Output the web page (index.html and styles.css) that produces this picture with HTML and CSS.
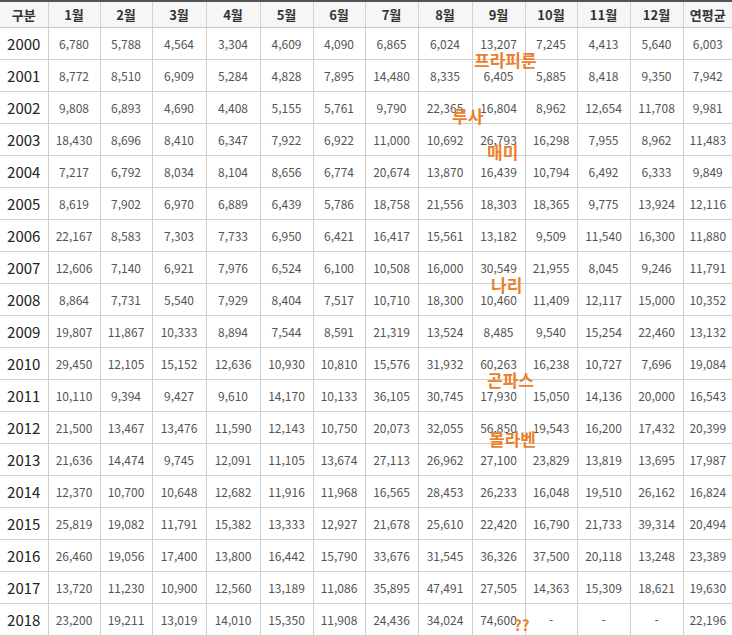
FILE: index.html
```html
<!DOCTYPE html>
<html lang="ko">
<head>
<meta charset="utf-8">
<link rel="stylesheet" href="styles.css">
</head>
<body>
<div class="wrap">
<table class="tbl">
<colgroup>
<col class="c0"><col class="c1"><col class="c2"><col class="c3"><col class="c4"><col class="c5"><col class="c6"><col class="c7"><col class="c8"><col class="c9"><col class="c10"><col class="c11"><col class="c12"><col class="c13">
</colgroup>
<thead>
<tr><th>구분</th><th>1월</th><th>2월</th><th>3월</th><th>4월</th><th>5월</th><th>6월</th><th>7월</th><th>8월</th><th>9월</th><th>10월</th><th>11월</th><th>12월</th><th>연평균</th></tr>
</thead>
<tbody>
<tr><td class="y">2000</td><td>6,780</td><td>5,788</td><td>4,564</td><td>3,304</td><td>4,609</td><td>4,090</td><td>6,865</td><td>6,024</td><td>13,207</td><td>7,245</td><td>4,413</td><td>5,640</td><td>6,003</td></tr>
<tr><td class="y">2001</td><td>8,772</td><td>8,510</td><td>6,909</td><td>5,284</td><td>4,828</td><td>7,895</td><td>14,480</td><td>8,335</td><td>6,405</td><td>5,885</td><td>8,418</td><td>9,350</td><td>7,942</td></tr>
<tr><td class="y">2002</td><td>9,808</td><td>6,893</td><td>4,690</td><td>4,408</td><td>5,155</td><td>5,761</td><td>9,790</td><td>22,365</td><td>16,804</td><td>8,962</td><td>12,654</td><td>11,708</td><td>9,981</td></tr>
<tr><td class="y">2003</td><td>18,430</td><td>8,696</td><td>8,410</td><td>6,347</td><td>7,922</td><td>6,922</td><td>11,000</td><td>10,692</td><td>26,793</td><td>16,298</td><td>7,955</td><td>8,962</td><td>11,483</td></tr>
<tr><td class="y">2004</td><td>7,217</td><td>6,792</td><td>8,034</td><td>8,104</td><td>8,656</td><td>6,774</td><td>20,674</td><td>13,870</td><td>16,439</td><td>10,794</td><td>6,492</td><td>6,333</td><td>9,849</td></tr>
<tr><td class="y">2005</td><td>8,619</td><td>7,902</td><td>6,970</td><td>6,889</td><td>6,439</td><td>5,786</td><td>18,758</td><td>21,556</td><td>18,303</td><td>18,365</td><td>9,775</td><td>13,924</td><td>12,116</td></tr>
<tr><td class="y">2006</td><td>22,167</td><td>8,583</td><td>7,303</td><td>7,733</td><td>6,950</td><td>6,421</td><td>16,417</td><td>15,561</td><td>13,182</td><td>9,509</td><td>11,540</td><td>16,300</td><td>11,880</td></tr>
<tr><td class="y">2007</td><td>12,606</td><td>7,140</td><td>6,921</td><td>7,976</td><td>6,524</td><td>6,100</td><td>10,508</td><td>16,000</td><td>30,549</td><td>21,955</td><td>8,045</td><td>9,246</td><td>11,791</td></tr>
<tr><td class="y">2008</td><td>8,864</td><td>7,731</td><td>5,540</td><td>7,929</td><td>8,404</td><td>7,517</td><td>10,710</td><td>18,300</td><td>10,460</td><td>11,409</td><td>12,117</td><td>15,000</td><td>10,352</td></tr>
<tr><td class="y">2009</td><td>19,807</td><td>11,867</td><td>10,333</td><td>8,894</td><td>7,544</td><td>8,591</td><td>21,319</td><td>13,524</td><td>8,485</td><td>9,540</td><td>15,254</td><td>22,460</td><td>13,132</td></tr>
<tr><td class="y">2010</td><td>29,450</td><td>12,105</td><td>15,152</td><td>12,636</td><td>10,930</td><td>10,810</td><td>15,576</td><td>31,932</td><td>60,263</td><td>16,238</td><td>10,727</td><td>7,696</td><td>19,084</td></tr>
<tr><td class="y">2011</td><td>10,110</td><td>9,394</td><td>9,427</td><td>9,610</td><td>14,170</td><td>10,133</td><td>36,105</td><td>30,745</td><td>17,930</td><td>15,050</td><td>14,136</td><td>20,000</td><td>16,543</td></tr>
<tr><td class="y">2012</td><td>21,500</td><td>13,467</td><td>13,476</td><td>11,590</td><td>12,143</td><td>10,750</td><td>20,073</td><td>32,055</td><td>56,850</td><td>19,543</td><td>16,200</td><td>17,432</td><td>20,399</td></tr>
<tr><td class="y">2013</td><td>21,636</td><td>14,474</td><td>9,745</td><td>12,091</td><td>11,105</td><td>13,674</td><td>27,113</td><td>26,962</td><td>27,100</td><td>23,829</td><td>13,819</td><td>13,695</td><td>17,987</td></tr>
<tr><td class="y">2014</td><td>12,370</td><td>10,700</td><td>10,648</td><td>12,682</td><td>11,916</td><td>11,968</td><td>16,565</td><td>28,453</td><td>26,233</td><td>16,048</td><td>19,510</td><td>26,162</td><td>16,824</td></tr>
<tr><td class="y">2015</td><td>25,819</td><td>19,082</td><td>11,791</td><td>15,382</td><td>13,333</td><td>12,927</td><td>21,678</td><td>25,610</td><td>22,420</td><td>16,790</td><td>21,733</td><td>39,314</td><td>20,494</td></tr>
<tr><td class="y">2016</td><td>26,460</td><td>19,056</td><td>17,400</td><td>13,800</td><td>16,442</td><td>15,790</td><td>33,676</td><td>31,545</td><td>36,326</td><td>37,500</td><td>20,118</td><td>13,248</td><td>23,389</td></tr>
<tr><td class="y">2017</td><td>13,720</td><td>11,230</td><td>10,900</td><td>12,560</td><td>13,189</td><td>11,086</td><td>35,895</td><td>47,491</td><td>27,505</td><td>14,363</td><td>15,309</td><td>18,621</td><td>19,630</td></tr>
<tr><td class="y">2018</td><td>23,200</td><td>19,211</td><td>13,019</td><td>14,010</td><td>15,350</td><td>11,908</td><td>24,436</td><td>34,024</td><td>74,600</td><td>-</td><td>-</td><td>-</td><td>22,196</td></tr>
</tbody>
</table>
<span class="note n1">프라피룬</span>
<span class="note n2">루사</span>
<span class="note n3">매미</span>
<span class="note n4">나리</span>
<span class="note n5">곤파스</span>
<span class="note n6">볼라벤</span>
<span class="note n7">??</span>
</div>
</body>
</html>
```
FILE: styles.css
```css
html, body {
  margin: 0;
  padding: 0;
  background: #fff;
}
.wrap {
  position: relative;
  width: 732px;
  height: 636px;
  overflow: hidden;
  font-family: "Noto Sans CJK KR", "Noto Sans", sans-serif;
}
.tbl {
  border-collapse: collapse;
  table-layout: fixed;
  width: 732px;
}
.c0 { width: 48px; }
.c1 { width: 52px; }
.c2 { width: 52px; }
.c3 { width: 54px; }
.c4 { width: 54px; }
.c5 { width: 53px; }
.c6 { width: 52px; }
.c7 { width: 53px; }
.c8 { width: 54px; }
.c9 { width: 53px; }
.c10 { width: 52px; }
.c11 { width: 53px; }
.c12 { width: 53px; }
.c13 { width: 49px; }
.tbl th {
  height: 25px;
  padding: 0;
  background: #f6f6f6;
  border-top: 2px solid #555;
  border-bottom: 1px solid #c8c8c8;
  border-left: 1px solid #d4d4d4;
  font-size: 13px;
  font-weight: 700;
  color: #333;
  text-align: center;
  vertical-align: middle;
  line-height: 1;
}
.tbl td {
  height: 31px;
  padding: 0;
  border-bottom: 1px solid #cfcfcf;
  border-left: 1px solid #cfcfcf;
  font-size: 12px;
  color: #555;
  text-align: center;
  vertical-align: middle;
  line-height: 1;
}
.tbl th:first-child, .tbl td:first-child {
  border-left: none;
}
.tbl td.y {
  font-size: 15px;
  color: #222;
}
.note {
  position: absolute;
  font-size: 17px;
  font-weight: 700;
  color: #ec7f2c;
  line-height: 1;
  white-space: nowrap;
}
.n1 { left: 474px; top: 51px; }
.n2 { left: 452px; top: 107px; }
.n3 { left: 487px; top: 143px; }
.n4 { left: 491px; top: 276px; }
.n5 { left: 487px; top: 371px; }
.n6 { left: 489px; top: 430px; }
.n7 { left: 514px; top: 617px; font-size: 15px; }
```
